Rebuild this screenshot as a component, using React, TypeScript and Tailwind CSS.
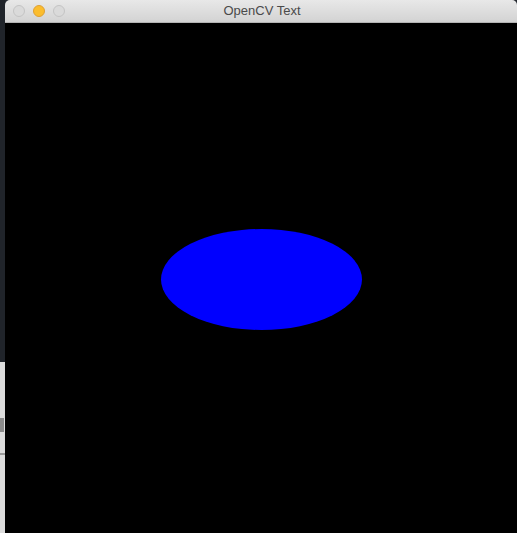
export default function App() {
  return (
    <div className="flex h-[533px] w-[517px] overflow-hidden bg-[#252a31] font-['Helvetica_Neue','Liberation_Sans',Arial,sans-serif]">
      {/* desktop strip behind the window */}
      <div className="flex w-[5px] shrink-0 flex-col">
        <div className="h-[362px] bg-[#20242a]" />
        <div className="flex flex-1 flex-col bg-[#dcdcdc]">
          <div className="h-[56px]" />
          <div className="h-[14px] w-[4px] bg-[#8a8a8a]" />
          <div className="h-[21px]" />
          <div className="h-[2px] bg-[#9a9a9a]" />
        </div>
      </div>

      {/* OpenCV window */}
      <div className="flex flex-1 flex-col">
        <div className="relative flex h-[23px] shrink-0 items-center rounded-t-[5px] border-b border-[#b3b3b3] bg-gradient-to-b from-[#e8e8e8] to-[#d3d3d3]">
          <div className="flex items-center gap-[8px] pl-[8px]">
            <span className="h-[12px] w-[12px] rounded-full border border-[#c4c4c4] bg-[#dadada]" />
            <span className="h-[12px] w-[12px] rounded-full border border-[#dea034] bg-[#fbbd2e]" />
            <span className="h-[12px] w-[12px] rounded-full border border-[#c4c4c4] bg-[#dadada]" />
          </div>
          <div className="absolute inset-0 flex items-center justify-center pl-[2px] text-[13px] text-[#4a4a4a]">
            OpenCV Text
          </div>
        </div>
        <div className="flex flex-1 items-center justify-center bg-black pt-[2px]">
          <div className="h-[101px] w-[201px] rounded-[50%] bg-[#0000ff]" />
        </div>
      </div>
    </div>
  );
}
